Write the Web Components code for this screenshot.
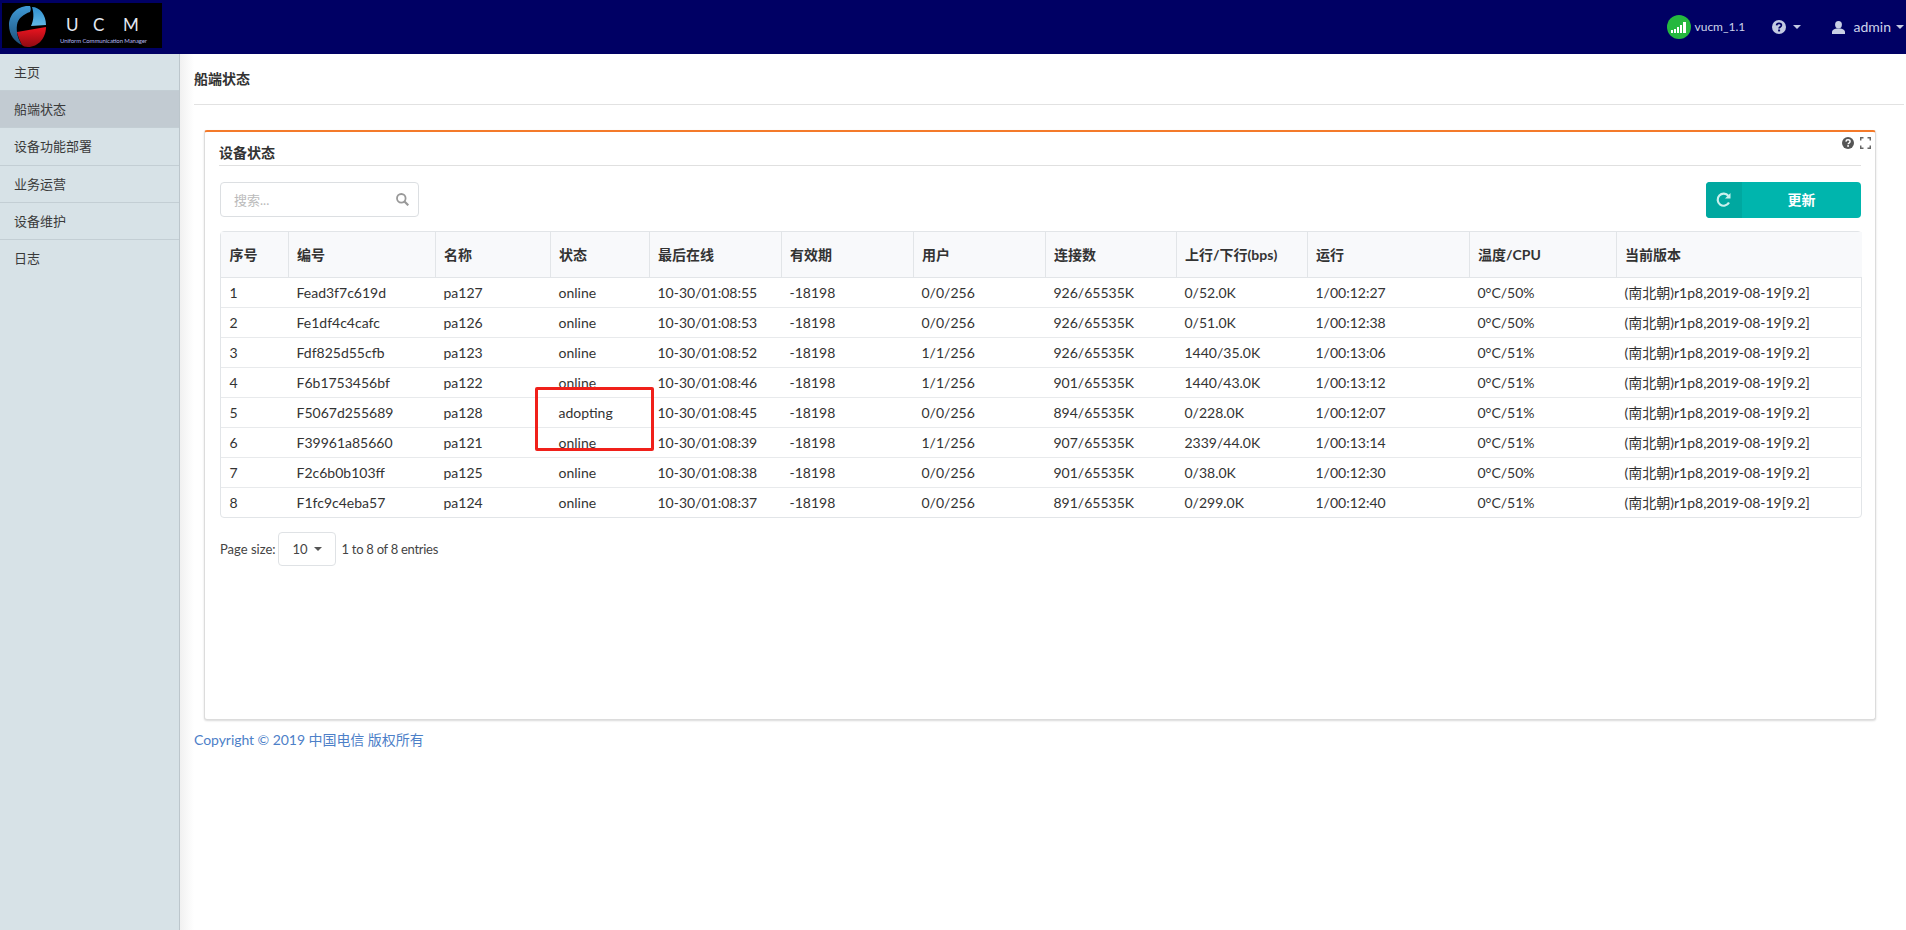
<!DOCTYPE html>
<html lang="zh">
<head>
<meta charset="utf-8">
<title>UCM</title>
<style>
html, body { margin: 0; height: 100%; }
body { font: 13px/18px Lato, "Noto Sans CJK SC", sans-serif; color: #333; overflow: hidden; }
</style>
</head>
<body>
<ucm-app>
    <ucm-navbar slot="top"></ucm-navbar>
    <ucm-sidebar slot="side" active="1"></ucm-sidebar>
    <ucm-card title="设备状态">
        <ucm-toolbar></ucm-toolbar>
        <ucm-table></ucm-table>
        <ucm-pager></ucm-pager>
    </ucm-card>
</ucm-app>

<script>
const caret = (color) => `<svg width="8" height="4" viewBox="0 0 8 4"><path d="M0 0h8L4 4z" fill="${color}"/></svg>`;
const helpIcon = (size, color, mark) => `<svg width="${size}" height="${size}" viewBox="0 0 14 14">
    <circle cx="7" cy="7" r="7" fill="${color}"/>
    <path d="M4.6 5.4C4.7 4 5.7 3.3 7 3.3c1.4 0 2.4.8 2.4 2 0 1.800-2.300 1.700-2.300 3.200" fill="none" stroke="${mark}" stroke-width="1.700"/>
    <rect x="6.100" y="9.500" width="2" height="1.900" fill="${mark}"/></svg>`;

customElements.define('ucm-app', class extends HTMLElement {
    constructor() {
        super();
        this.attachShadow({ mode: 'open' }).innerHTML = `
        <style>
        :host { display: flex; flex-direction: column; height: 100vh; }
        #body { flex: 1; display: flex; min-height: 0; }
        main {
            flex: 1;
            min-width: 0;
            padding: 0 2px 0 14px;
            background: linear-gradient(to right, #f1f1f1, #fff 14px);
        }
        h1 {
            margin: 0 0 25px;
            height: 50px;
            line-height: 50px;
            font-size: 14px;
            font-weight: 700;
            border-bottom: 1px solid #e2e2e2;
        }
        footer {
            margin-top: 10px;
            color: #4d80c8;
            font-size: 14px;
            line-height: 20px;
            letter-spacing: -.05px;
        }
        </style>
        <slot name="top"></slot>
        <div id="body">
            <slot name="side"></slot>
            <main>
                <h1>船端状态</h1>
                <slot></slot>
                <footer>Copyright © 2019 中国电信 版权所有</footer>
            </main>
        </div>`;
    }
});

customElements.define('ucm-navbar', class extends HTMLElement {
    constructor() {
        super();
        this.attachShadow({ mode: 'open' }).innerHTML = `
        <style>
        :host {
            display: flex;
            align-items: center;
            height: 54px;
            background: #000064;
            color: #cdd3ea;
            flex: none;
        }
        #logo { margin: -3px 0 0 2px; display: block; }
        .right { margin-left: auto; display: flex; align-items: center; }
        .signal { width: 24px; height: 24px; border-radius: 50%; background: #25b83f; display: flex; }
        .ver { margin-left: 4px; width: 77px; font-size: 12px; }
        .help { display: flex; align-items: center; gap: 7px; margin-right: 31px; }
        .user { display: flex; align-items: center; margin-right: 2px; }
        .name { margin: 0 5px 0 9px; font-size: 14px; }
        </style>
        <svg id="logo" width="160" height="45" viewBox="0 0 160 45">
            <defs>
                <linearGradient id="lb" x1="0" y1="0" x2="0" y2="1"><stop offset="0" stop-color="#2f8fcf"/><stop offset="1" stop-color="#62b8e6"/></linearGradient>
                <linearGradient id="db" x1="0" y1="0" x2="0" y2="1"><stop offset="0" stop-color="#3f9ad6"/><stop offset="1" stop-color="#1d4f78"/></linearGradient>
                <linearGradient id="rd" x1="0" y1="0" x2="0" y2="1"><stop offset="0" stop-color="#ee1520"/><stop offset="1" stop-color="#8f0a12"/></linearGradient>
            </defs>
            <rect width="160" height="45" fill="#000"/>
            <path d="M28 3C15 2 7 12 7 22c0 10 6 17 13 20-4-6-6-13-5-20 1-7 7-11 13-13 1-2 1-4 0-6z" fill="url(#db)"/>
            <path d="M30 4c8 0 14 8 14 18l-15 1c3-6 3-13 1-19z" fill="url(#lb)"/>
            <path d="M15 29l29-5c0 11-8 20-18 20-3 0-5-1-6-2-2-4-4-8-5-13z" fill="url(#rd)"/>
            <text x="64" y="28" fill="#e4e8f2" font-family="Lato, sans-serif" font-size="17">U</text>
            <text x="91" y="28" fill="#e4e8f2" font-family="Lato, sans-serif" font-size="17">C</text>
            <text x="121" y="28" fill="#e4e8f2" font-family="Lato, sans-serif" font-size="17">M</text>
            <text x="58" y="40" fill="#b4b8f0" font-family="Lato, sans-serif" font-size="6" textLength="87">Uniform Communication Manager</text>
        </svg>
        <div class="right">
            <div class="signal">
                <svg width="24" height="24" viewBox="0 0 24 24" fill="#fff">
                    <rect x="4" y="15" width="2" height="3"/><rect x="7" y="14" width="2" height="4"/>
                    <rect x="10" y="12" width="2" height="6"/><rect x="13" y="10" width="2" height="8"/>
                    <rect x="16" y="7" width="3" height="11"/>
                </svg>
            </div>
            <span class="ver">vucm_1.1</span>
            <div class="help">${helpIcon(14, '#c3cae2', '#000064')}${caret('#c3cae2')}</div>
            <div class="user">
                <svg width="13" height="13" viewBox="0 0 13 13" fill="#c9d0e6">
                    <ellipse cx="6.500" cy="3.700" rx="3.400" ry="3.700"/>
                    <path d="M0 13v-2c0-2 2-3 4.300-3.500h4.400C11 8 13 9 13 11v2z"/>
                </svg>
                <span class="name">admin</span>${caret('#c3cae2')}
            </div>
        </div>`;
    }
});

customElements.define('ucm-sidebar', class extends HTMLElement {
    constructor() {
        super();
        let items = ['主页', '船端状态', '设备功能部署', '业务运营', '设备维护', '日志'];
        let active = +this.getAttribute('active');
        this.attachShadow({ mode: 'open' }).innerHTML = `
        <style>
        :host {
            display: block;
            flex: none;
            box-sizing: border-box;
            width: 180px;
            height: 100%;
            background: #d7e2e7;
            border-right: 1px solid #bcc6cc;
        }
        div {
            box-sizing: border-box;
            height: 37.200px;
            line-height: 36px;
            padding-left: 14px;
            border-bottom: 1px solid #c3ced4;
            color: #3a3a3a;
        }
        div:first-child { height: 38.600px; line-height: 37px; }
        div.on { background: #c2cbd2; }
        div:last-child { border: 0; }
        </style>
        ${items.map((t, i) => `<div class="${i === active ? 'on' : ''}">${t}</div>`).join('')}`;
    }
});

customElements.define('ucm-card', class extends HTMLElement {
    constructor() {
        super();
        this.attachShadow({ mode: 'open' }).innerHTML = `
        <style>
        :host {
            display: block;
            position: relative;
            box-sizing: border-box;
            height: 590px;
            margin-left: 10px;
            width: 1672px;
            padding: 0 14px 0 14px;
            background: #fff;
            border: 1px solid #dcdcdc;
            border-top: 2px solid #f47a2a;
            border-radius: 3px;
            box-shadow: 0 1px 2px rgba(0,0,0,.15);
        }
        h2 {
            margin: 0 0 16px;
            height: 34px;
            line-height: 42px;
            font-size: 14px;
            font-weight: 700;
            border-bottom: 1px solid #e0e0e0;
            box-sizing: border-box;
        }
        .tools { position: absolute; top: 5px; right: 4px; display: flex; gap: 6px; }
        </style>
        <h2>${this.getAttribute('title')}</h2>
        <div class="tools">
            ${helpIcon(12, '#555', '#fff')}
            <svg width="11" height="12" viewBox="0 0 11 12" fill="none" stroke="#666" stroke-width="1.500">
                <path d="M.7 3.500V.8h2.800M7.500.8h2.800v2.700M10.300 8.500v2.700H7.500M3.500 11.200H.7V8.500"/>
            </svg>
        </div>
        <slot></slot>`;
    }
});

customElements.define('ucm-toolbar', class extends HTMLElement {
    constructor() {
        super();
        this.attachShadow({ mode: 'open' }).innerHTML = `
        <style>
        :host { display: flex; justify-content: space-between; align-items: flex-start; height: 36px; margin-bottom: 13px; padding-left: 1px; }
        .search {
            box-sizing: border-box;
            width: 199px;
            height: 35px;
            border: 1px solid #dcdfe2;
            border-radius: 4px;
            display: flex;
            align-items: center;
            padding: 0 9px 0 13px;
            color: #bbb;
        }
        .search span { flex: 1; }
        button {
            width: 155px;
            height: 36px;
            padding: 0;
            border: 0;
            border-radius: 4px;
            background: #00b5ad;
            color: #fff;
            font: 700 14px Lato, "Noto Sans CJK SC", sans-serif;
            display: flex;
            overflow: hidden;
        }
        .ic { width: 36px; height: 36px; background: #00a8a0; display: flex; align-items: center; justify-content: center; }
        .tx { flex: 1; line-height: 36px; }
        </style>
        <div class="search">
            <span>搜索...</span>
            <svg width="13" height="13" viewBox="0 0 13 13" fill="none" stroke="#999" stroke-width="1.800">
                <circle cx="5.300" cy="5.300" r="4.300"/><path d="M8.500 8.500l3.800 3.800" stroke-width="2.200"/>
            </svg>
        </div>
        <button>
            <span class="ic">
                <svg width="16" height="16" viewBox="0 0 16 16" fill="none" stroke="#c9f0ed" stroke-width="2.200">
                    <path d="M13 10.500A6 6 0 1 1 12.400 4"/><path d="M14.500 1v5.500H9z" fill="#c9f0ed" stroke="none"/>
                </svg>
            </span>
            <span class="tx">更新</span>
        </button>`;
    }
});

const columns = [
    ['序号', 67], ['编号', 147], ['名称', 115], ['状态', 99], ['最后在线', 132], ['有效期', 132],
    ['用户', 132], ['连接数', 131], ['上行/下行(bps)', 131], ['运行', 162], ['温度/CPU', 147], ['当前版本', 246],
];
const ver = '(南北朝)r1p8,2019-08-19[9.2]';
const rows = [
    [1, 'Fead3f7c619d', 'pa127', 'online', '10-30/01:08:55', '-18198', '0/0/256', '926/65535K', '0/52.0K', '1/00:12:27', '0°C/50%', ver],
    [2, 'Fe1df4c4cafc', 'pa126', 'online', '10-30/01:08:53', '-18198', '0/0/256', '926/65535K', '0/51.0K', '1/00:12:38', '0°C/50%', ver],
    [3, 'Fdf825d55cfb', 'pa123', 'online', '10-30/01:08:52', '-18198', '1/1/256', '926/65535K', '1440/35.0K', '1/00:13:06', '0°C/51%', ver],
    [4, 'F6b1753456bf', 'pa122', 'online', '10-30/01:08:46', '-18198', '1/1/256', '901/65535K', '1440/43.0K', '1/00:13:12', '0°C/51%', ver],
    [5, 'F5067d255689', 'pa128', 'adopting', '10-30/01:08:45', '-18198', '0/0/256', '894/65535K', '0/228.0K', '1/00:12:07', '0°C/51%', ver],
    [6, 'F39961a85660', 'pa121', 'online', '10-30/01:08:39', '-18198', '1/1/256', '907/65535K', '2339/44.0K', '1/00:13:14', '0°C/51%', ver],
    [7, 'F2c6b0b103ff', 'pa125', 'online', '10-30/01:08:38', '-18198', '0/0/256', '901/65535K', '0/38.0K', '1/00:12:30', '0°C/50%', ver],
    [8, 'F1fc9c4eba57', 'pa124', 'online', '10-30/01:08:37', '-18198', '0/0/256', '891/65535K', '0/299.0K', '1/00:12:40', '0°C/51%', ver],
];

customElements.define('ucm-table', class extends HTMLElement {
    constructor() {
        super();
        this.attachShadow({ mode: 'open' }).innerHTML = `
        <style>
        :host {
            display: block;
            position: relative;
            box-sizing: border-box;
            width: 1642px;
            margin-left: 1px;
            border: 1px solid #e2e5e8;
            border-radius: 4px;
            font-size: 14px;
        }
        table { border-collapse: collapse; table-layout: fixed; width: 1640px; }
        th, td { padding: 0 0 0 8.500px; text-align: left; white-space: nowrap; overflow: hidden; }
        th {
            height: 45px;
            background: #f8f9fb;
            font-weight: 700;
            border-bottom: 1px solid #e2e5e8;
            border-right: 1px solid #e2e5e8;
        }
        th:last-child { border-right: 0; }
        td { height: 29px; color: #333; border-bottom: 1px solid #e8eaec; }
        tr:last-child td { border-bottom: 0; }
        .mark {
            position: absolute;
            left: 314px;
            top: 155px;
            box-sizing: border-box;
            width: 119px;
            height: 64px;
            border: 3px solid #f0201a;
            border-radius: 2px;
        }
        </style>
        <table>
            <colgroup>${columns.map(c => `<col style="width:${c[1]}px">`).join('')}</colgroup>
            <thead><tr>${columns.map(c => `<th>${c[0]}</th>`).join('')}</tr></thead>
            <tbody>${rows.map(r => `<tr>${r.map(v => `<td>${v}</td>`).join('')}</tr>`).join('')}</tbody>
        </table>
        <div class="mark"></div>`;
    }
});

customElements.define('ucm-pager', class extends HTMLElement {
    constructor() {
        super();
        this.attachShadow({ mode: 'open' }).innerHTML = `
        <style>
        :host { display: flex; align-items: center; margin: 14px 0 0 1px; color: #444; }
        .size {
            box-sizing: border-box;
            width: 58px;
            height: 34px;
            margin: 0 6px 0 2px;
            border: 1px solid #dfe2e5;
            border-radius: 4px;
            display: flex;
            align-items: center;
            gap: 6px;
            padding-left: 14px;
        }
        .info { letter-spacing: -.28px; }
        </style>
        <span>Page size:</span>
        <div class="size"><span>10</span>${caret('#555')}</div>
        <span class="info">1 to 8 of 8 entries</span>`;
    }
});
</script>
</body>
</html>
